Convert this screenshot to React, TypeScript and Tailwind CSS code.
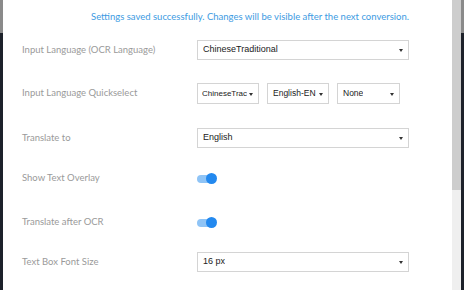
import React from 'react';

const label = "font-['Lato',sans-serif] text-[9.5px] text-[#9a9a9a]";

const Select: React.FC<{ value: string; className?: string }> = ({ value, className }) => (
  <div
    className={`relative flex items-center border border-[#d4d4d4] bg-white font-['Liberation_Sans',Arial,sans-serif] text-[#222] ${className ?? ''}`}
  >
    <span className="overflow-hidden whitespace-nowrap">{value}</span>
    <span className="absolute right-[5px] top-1/2 h-0 w-0 -translate-y-[1px] border-x-[2px] border-t-[3px] border-x-transparent border-t-[#333]" />
  </div>
);

const Toggle: React.FC = () => (
  <div className="relative h-[11px] w-[20px]">
    <div className="absolute left-0 top-[2px] h-[8px] w-[18px] rounded-full bg-[#8fc4f6]" />
    <div className="absolute right-0 top-0 h-[11px] w-[11px] rounded-full bg-[#2389ef]" />
  </div>
);

const Row: React.FC<{ title: string; className: string; children: React.ReactNode }> = ({
  title,
  className,
  children,
}) => (
  <div className={`flex items-center ${className}`}>
    <div className={`w-[175px] ${label}`}>{title}</div>
    {children}
  </div>
);

export default function App() {
  return (
    <div className="flex h-[290px] w-[464px] overflow-hidden bg-white">
      <div className="flex w-[3px] flex-col">
        <div className="h-[33px] bg-[#8a8a8a]" />
        <div className="flex-1 bg-[#1d212a]" />
      </div>
      <div className="flex-1 pl-[19px]">
        <div className="mt-[11px] flex h-[12px] items-center justify-end pr-[43px] font-['Lato',sans-serif] text-[9.5px] text-[#3d9be2]">
          Settings saved successfully. Changes will be visible after the next conversion.
        </div>
        <Row title="Input Language (OCR Language)" className="mt-[17px] h-[20px]">
          <Select value="ChineseTraditional" className="h-[20px] w-[212px] pl-[5px] pr-[11px] text-[9px]" />
        </Row>
        <Row title="Input Language Quickselect" className="mt-[23px] h-[21px]">
          <div className="flex gap-[8px]">
            <Select value="ChineseTrac" className="h-[21px] w-[62px] pl-[4px] pr-[10px] text-[8px]" />
            <Select value="English-EN" className="h-[21px] w-[62px] pl-[5px] pr-[10px] text-[8.5px]" />
            <Select value="None" className="h-[21px] w-[63px] pl-[5px] pr-[10px] text-[8.5px]" />
          </div>
        </Row>
        <Row title="Translate to" className="mt-[24px] h-[20px]">
          <Select value="English" className="h-[20px] w-[212px] pl-[5px] pr-[11px] text-[9px]" />
        </Row>
        <Row title="Show Text Overlay" className="mt-[20px] h-[20px]">
          <Toggle />
        </Row>
        <Row title="Translate after OCR" className="mt-[24px] h-[20px]">
          <Toggle />
        </Row>
        <Row title="Text Box Font Size" className="mt-[20px] h-[20px]">
          <Select value="16 px" className="h-[20px] w-[212px] pl-[5px] pr-[11px] text-[9px]" />
        </Row>
      </div>
      <div className="flex w-[9px] flex-col bg-[#efefef]">
        <div className="h-[190px] bg-[#cdcdcd]" />
      </div>
      <div className="flex w-[3px] flex-col">
        <div className="h-[33px] bg-[#8a8a8a]" />
        <div className="flex-1 bg-[#1d212a]" />
      </div>
    </div>
  );
}
